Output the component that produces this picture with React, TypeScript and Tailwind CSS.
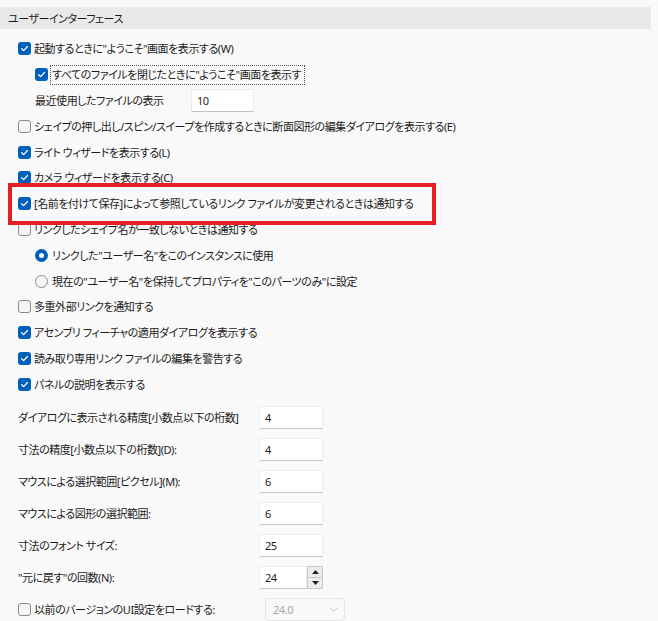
import React from 'react';

const font = "font-['Noto_Sans','Noto_Sans_CJK_JP',sans-serif] [font-feature-settings:'palt'] tracking-[-0.45px]";

function Check({ on }: { on?: boolean }) {
  if (on) {
    return (
      <span className="flex h-[13px] w-[13px] shrink-0 items-center justify-center rounded-[3px] bg-[#005fb8]">
        <svg width="9" height="9" viewBox="0 0 9 9" fill="none">
          <path d="M1.6 4.7 L3.6 6.6 L7.5 2.5" stroke="white" strokeWidth="1.3" strokeLinecap="round" strokeLinejoin="round" />
        </svg>
      </span>
    );
  }
  return <span className="h-[13px] w-[13px] shrink-0 rounded-[3px] border border-[#8a8a8a] bg-[#f6f6f6]" />;
}

function Radio({ on }: { on?: boolean }) {
  if (on) {
    return (
      <span className="flex h-[13px] w-[13px] shrink-0 items-center justify-center rounded-full bg-[#005fb8]">
        <span className="h-[5px] w-[5px] rounded-full bg-white" />
      </span>
    );
  }
  return <span className="h-[13px] w-[13px] shrink-0 rounded-full border border-[#8a8a8a] bg-[#f6f6f6]" />;
}

function CheckRow({ on, label }: { on?: boolean; label: string }) {
  return (
    <div className="flex h-[25.8px] items-center gap-[3px] pl-[18px]">
      <Check on={on} />
      <span>{label}</span>
    </div>
  );
}

function Field({ value }: { value: string }) {
  return (
    <div className="flex h-[23px] w-[64px] items-center border border-[#ececec] border-b-[#c4c4c4] bg-white pl-[5px]">
      {value}
    </div>
  );
}

function LabelRow({ label, value }: { label: string; value: string }) {
  return (
    <div className="flex h-[32px] items-center pl-[18px]">
      <span className="w-[241px] whitespace-nowrap">{label}</span>
      <Field value={value} />
    </div>
  );
}

export default function App() {
  return (
    <div className={`relative h-[621px] w-[658px] overflow-hidden whitespace-nowrap bg-[#f9f9f9] text-[11px] leading-none text-[#1b1b1b] ${font}`}>
      <div className="mt-[7px] flex h-[22px] w-[651px] items-center bg-[#e9e9e9] pl-[8px]">ユーザーインターフェース</div>

      <div className="mt-[7px] flex flex-col">
        <CheckRow on label={'起動するときに"ようこそ"画面を表示する(W)'} />
        <div className="flex h-[25.8px] items-center gap-[2px] pl-[35px]">
          <Check on />
          <span className="flex h-[20px] items-center border border-dotted border-[#555] px-[1px] pr-[3px]">
            すべてのファイルを閉じたときに"ようこそ"画面を表示す
          </span>
        </div>
        <div className="flex h-[25.8px] items-center pl-[35px]">
          <span className="w-[156px]">最近使用したファイルの表示</span>
          <div className="flex h-[23px] w-[63px] items-center border border-[#ececec] border-b-[#c4c4c4] bg-white pl-[5px]">10</div>
        </div>
        <CheckRow label="シェイプの押し出し/スピン/スイープを作成するときに断面図形の編集ダイアログを表示する(E)" />
        <CheckRow on label="ライト ウィザードを表示する(L)" />
        <CheckRow on label="カメラ ウィザードを表示する(C)" />
        <CheckRow on label="[名前を付けて保存]によって参照しているリンク ファイルが変更されるときは通知する" />
        <CheckRow label="リンクしたシェイプ名が一致しないときは通知する" />
        <div className="flex h-[25.8px] items-center gap-[4px] pl-[35px]">
          <Radio on />
          <span>リンクした"ユーザー名"をこのインスタンスに使用</span>
        </div>
        <div className="flex h-[25.8px] items-center gap-[4px] pl-[35px]">
          <Radio />
          <span>現在の"ユーザー名"を保持してプロパティを"このパーツのみ"に設定</span>
        </div>
        <CheckRow label="多重外部リンクを通知する" />
        <CheckRow on label="アセンブリ フィーチャの適用ダイアログを表示する" />
        <CheckRow on label="読み取り専用リンク ファイルの編集を警告する" />
        <CheckRow on label="パネルの説明を表示する" />
      </div>

      <div className="mt-[4px] flex flex-col">
        <LabelRow label="ダイアログに表示される精度[小数点以下の桁数]" value="4" />
        <LabelRow label="寸法の精度[小数点以下の桁数](D):" value="4" />
        <LabelRow label="マウスによる選択範囲[ピクセル](M):" value="6" />
        <LabelRow label="マウスによる図形の選択範囲:" value="6" />
        <LabelRow label="寸法のフォント サイズ:" value="25" />
        <div className="flex h-[32px] items-center pl-[18px]">
          <span className="w-[241px]">"元に戻す"の回数(N):</span>
          <div className="flex h-[23px] w-[48px] items-center border border-[#ececec] border-b-[#c4c4c4] bg-white pl-[5px]">24</div>
          <div className="flex h-[23px] w-[16px] flex-col border border-[#c8c8c8] bg-[#ececec]">
            <div className="flex flex-1 items-center justify-center border-b border-[#c8c8c8]">
              <svg width="7" height="4" viewBox="0 0 7 4"><path d="M0 4 L3.5 0 L7 4 Z" fill="#222" /></svg>
            </div>
            <div className="flex flex-1 items-center justify-center">
              <svg width="7" height="4" viewBox="0 0 7 4"><path d="M0 0 L3.5 4 L7 0 Z" fill="#222" /></svg>
            </div>
          </div>
        </div>
        <div className="flex h-[32px] items-center pl-[18px]">
          <div className="flex w-[247px] items-center gap-[3px]">
            <Check />
            <span>以前のバージョンのUI設定をロードする:</span>
          </div>
          <div className="flex h-[23px] w-[80px] items-center justify-between rounded-[3px] border border-[#e6e6e6] pl-[7px] pr-[6px] text-[#a6a6a6]">
            <span>24.0</span>
            <svg width="9" height="5" viewBox="0 0 9 5" fill="none">
              <path d="M0.5 0.5 L4.5 4.5 L8.5 0.5" stroke="#c4c4c4" strokeWidth="1" />
            </svg>
          </div>
        </div>
      </div>

      <div className="pointer-events-none absolute left-[8px] top-[183px] h-[42px] w-[428px] border-[4px] border-[#e81c24]" />
    </div>
  );
}
